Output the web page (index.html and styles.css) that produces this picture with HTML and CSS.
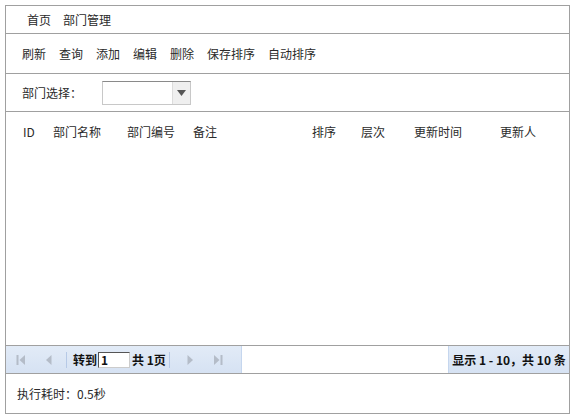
FILE: index.html
```html
<!DOCTYPE html>
<html lang="zh">
<head>
<meta charset="utf-8">
<link rel="stylesheet" href="styles.css">
</head>
<body>
<div class="panel">
  <div class="crumb"><span>首页</span><span>部门管理</span></div>
  <div class="toolbar">
    <span>刷新</span><span>查询</span><span>添加</span><span>编辑</span><span>删除</span><span>保存排序</span><span>自动排序</span>
  </div>
  <div class="filter">
    <span class="label">部门选择：</span>
    <div class="select"><div class="sel-btn"><svg width="9" height="6" viewBox="0 0 9 6"><path d="M0 0H9L4.5 6Z" fill="#555"/></svg></div></div>
  </div>
  <div class="grid">
    <div class="ghead">
      <span class="c-id">ID</span>
      <span class="c-name">部门名称</span>
      <span class="c-no">部门编号</span>
      <span class="c-note">备注</span>
      <span class="c-sort">排序</span>
      <span class="c-lv">层次</span>
      <span class="c-time">更新时间</span>
      <span class="c-user">更新人</span>
    </div>
  </div>
  <div class="pagerow">
    <div class="pager">
      <span class="pbtn first"><svg width="10" height="12" viewBox="0 0 10 12"><rect x="0.5" y="1" width="2" height="10" fill="#b4bcc8"/><path d="M9 1V11L3.5 6Z" fill="#b4bcc8"/></svg></span>
      <span class="pbtn"><svg width="8" height="12" viewBox="0 0 8 12"><path d="M6.5 1V11L1 6Z" fill="#b4bcc8"/></svg></span>
      <span class="psep"></span>
      <span class="ptxt">转到</span><span class="pinput">1</span><span class="ptxt">共 1页</span>
      <span class="psep"></span>
      <span class="pbtn"><svg width="8" height="12" viewBox="0 0 8 12"><path d="M1.5 1V11L7 6Z" fill="#b4bcc8"/></svg></span>
      <span class="pbtn"><svg width="10" height="12" viewBox="0 0 10 12"><path d="M1 1V11L6.5 6Z" fill="#b4bcc8"/><rect x="7.5" y="1" width="2" height="10" fill="#b4bcc8"/></svg></span>
    </div>
    <div class="pfill"></div>
    <div class="pinfo">显示 1 - 10，共 10 条</div>
  </div>
  <div class="foot">执行耗时：0.5秒</div>
</div>
</body>
</html>
```

FILE: styles.css
```css
* { box-sizing: border-box; }
body {
  margin: 0;
  background: #fff;
  font-family: "Noto Sans CJK SC", "Liberation Sans", sans-serif;
  font-size: 12px;
  color: #2a2a2a;
}
.panel {
  margin: 5px 0 0 5px;
  width: 565px;
  border: 1px solid #a0a0a0;
}
.crumb {
  height: 28px;
  border-bottom: 1px solid #a0a0a0;
  display: flex;
  align-items: center;
  gap: 12px;
  padding-left: 21px;
}
.toolbar {
  height: 40px;
  border-bottom: 1px solid #a0a0a0;
  display: flex;
  align-items: center;
  gap: 13px;
  padding-left: 16px;
}
.filter {
  height: 38px;
  border-bottom: 1px solid #a0a0a0;
  display: flex;
  align-items: center;
  padding-left: 16px;
}
.label { width: 80px; }
.select {
  width: 89px;
  height: 24px;
  border: 1px solid #c8c8c8;
  border-top-color: #8a8a8a;
  display: flex;
  justify-content: flex-end;
  background: #fff;
}
.sel-btn {
  width: 18px;
  background: #efefef;
  border-left: 1px solid #dcdcdc;
  display: flex;
  align-items: center;
  justify-content: center;
}
.grid {
  height: 234px;
  border-bottom: 1px solid #a0a0a0;
}
.ghead {
  position: relative;
  height: 40px;
}
.ghead span { position: absolute; top: 11px; }
.c-id { left: 17px; }
.c-name { left: 47px; }
.c-no { left: 121px; }
.c-note { left: 187px; }
.c-sort { left: 306px; }
.c-lv { left: 355px; }
.c-time { left: 408px; }
.c-user { left: 494px; }
.pagerow {
  display: flex;
  height: 28px;
  border-bottom: 1px solid #a0a0a0;
}
.pager {
  width: 236px;
  background: linear-gradient(#e2ebf7, #d6e2f3);
  border-right: 1px solid #c5d6ee;
  display: flex;
  align-items: center;
  padding-left: 5px;
  font-weight: bold;
  color: #111;
}
.pbtn {
  width: 28px;
  display: flex;
  align-items: center;
  justify-content: center;
}
.pbtn.first { width: 24px; justify-content: flex-start; padding-left: 5px; }
.psep {
  width: 1px;
  height: 16px;
  background: #b6c9e6;
  margin: 0 6px 0 3px;
}
.pinput {
  width: 32px;
  height: 16px;
  background: #fff;
  border: 1px solid #555;
  border-right-color: #ccc;
  border-bottom-color: #ccc;
  line-height: 14px;
  padding-left: 2px;
  margin: 0 2px 0 1px;
  font-weight: bold;
}
.ptxt { white-space: nowrap; }
.pfill { flex: 1; }
.pinfo {
  width: 121px;
  background: linear-gradient(#e2ebf7, #d6e2f3);
  border-left: 1px solid #c5d6ee;
  display: flex;
  align-items: center;
  justify-content: center;
  font-weight: bold;
  color: #111;
}
.foot {
  height: 39px;
  display: flex;
  align-items: center;
  padding-left: 11px;
}
```
